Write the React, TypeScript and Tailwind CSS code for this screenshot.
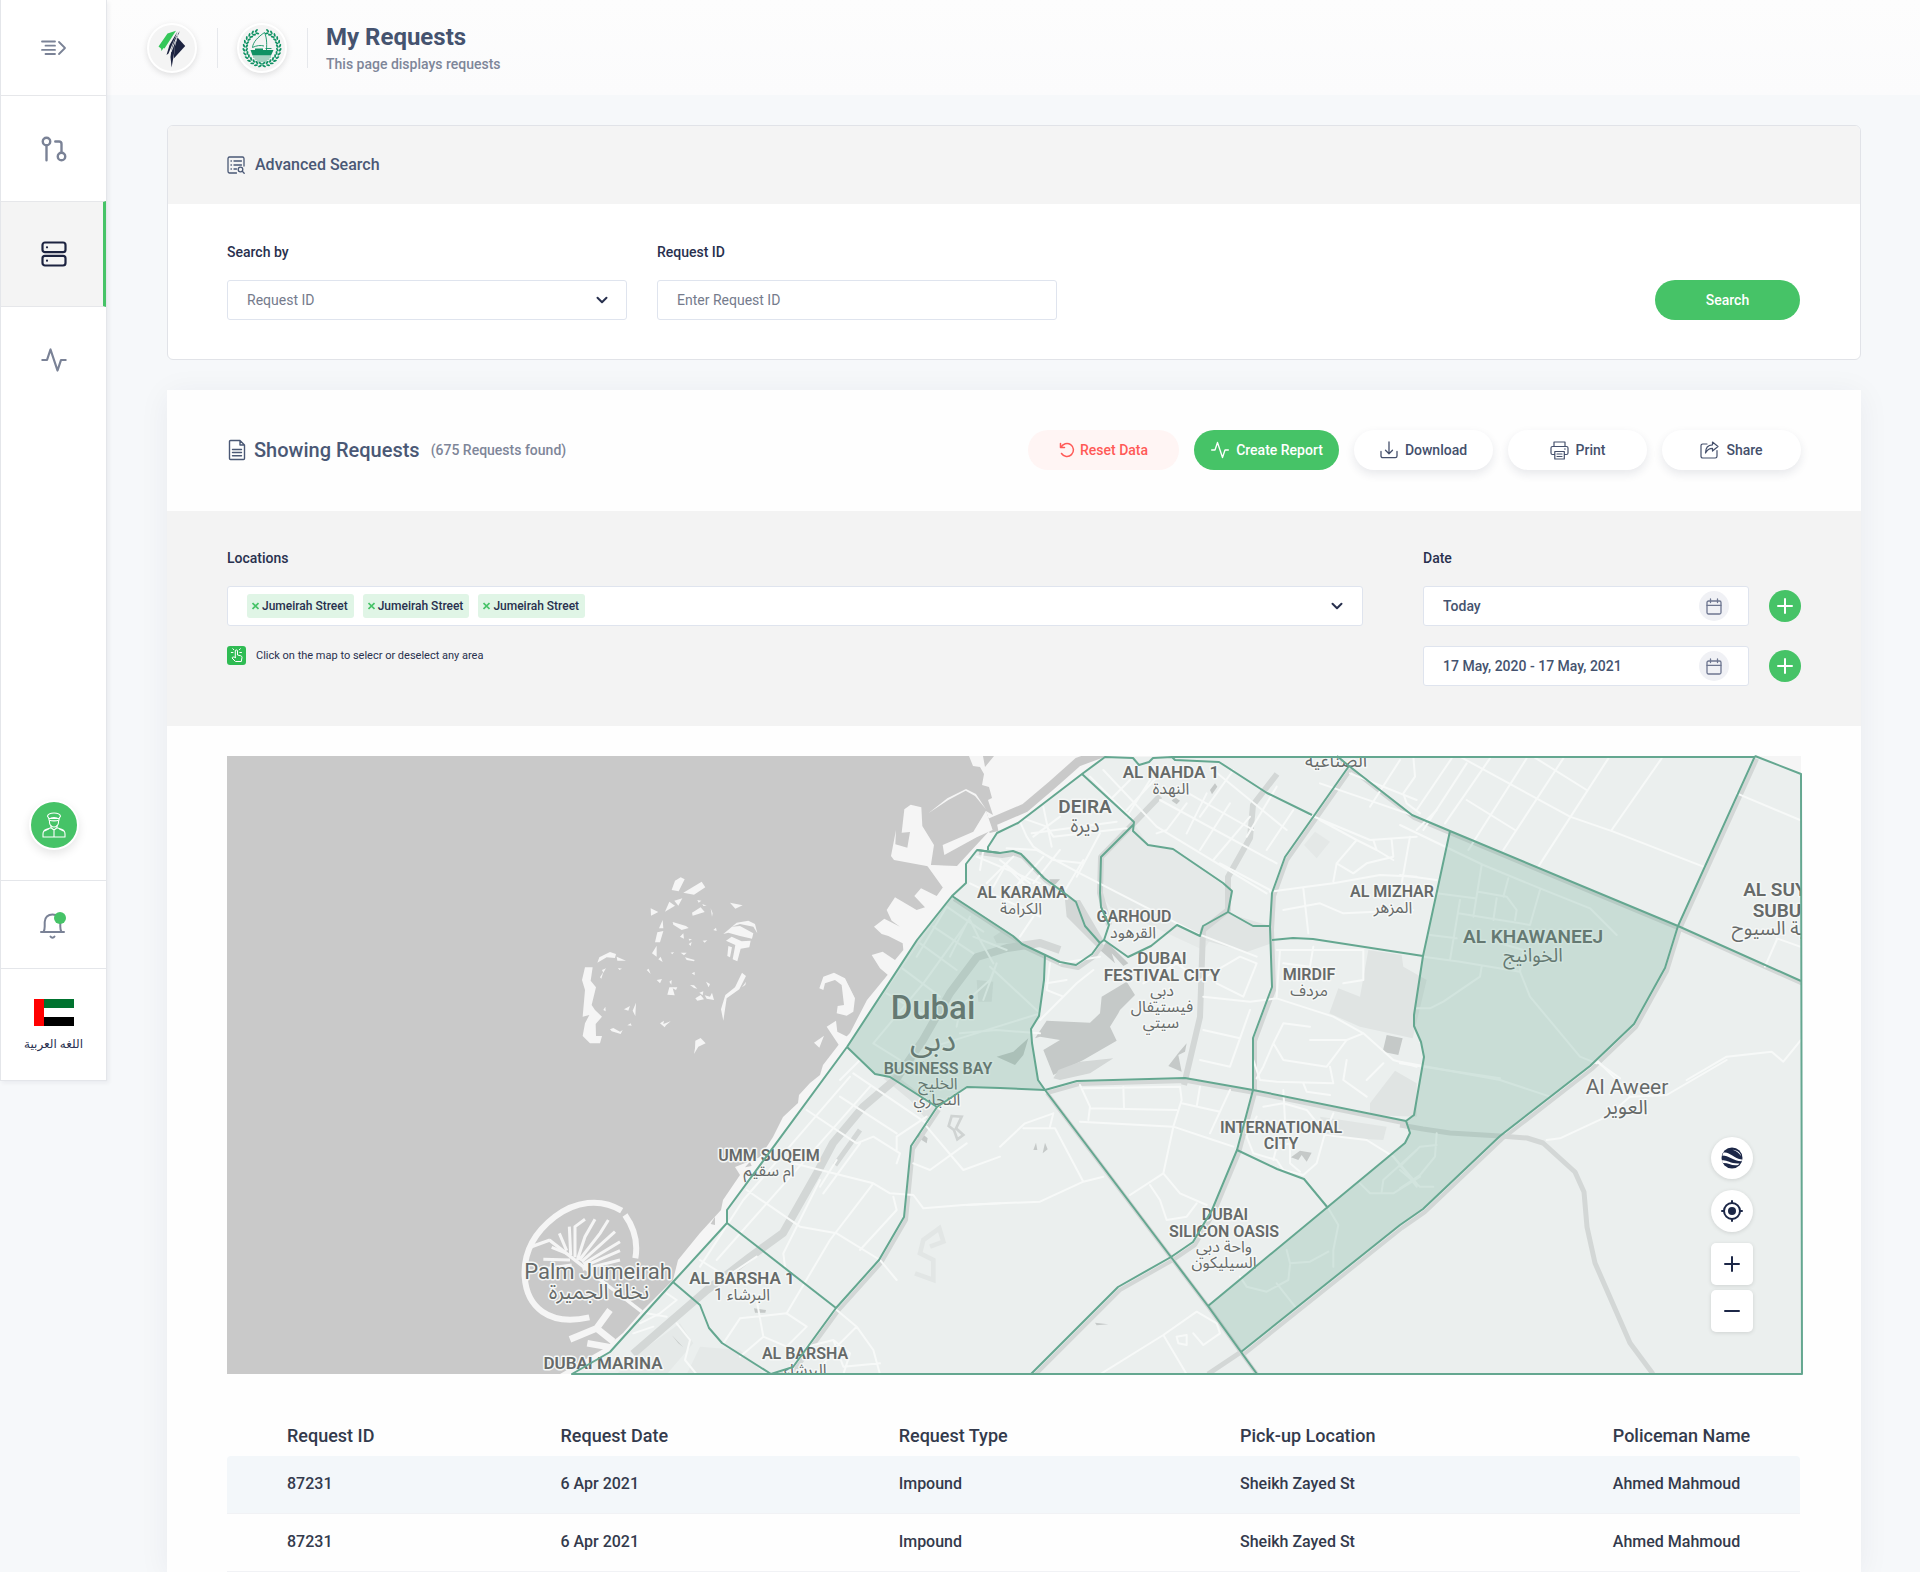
import type { ReactNode } from "react";

const SANS = "font-['Roboto','DejaVu_Sans',sans-serif]";

/* ---------- Icons ---------- */

function PulseIcon({ size, stroke }: { size: number; stroke: number }) {
  return (
    <svg width={size} height={size} viewBox="0 0 24 24" fill="none" stroke="currentColor" strokeWidth={stroke} strokeLinecap="round" strokeLinejoin="round" aria-hidden="true">
      <polyline points="22 12 18 12 15 21 9 3 6 12 2 12" />
    </svg>
  );
}

function ChevronIcon() {
  return (
    <svg width="14" height="14" viewBox="0 0 14 14" fill="none" stroke="#28304e" strokeWidth="2" strokeLinecap="round" strokeLinejoin="round" aria-hidden="true">
      <path d="M2.500 4.700 7 9.200 11.500 4.700" />
    </svg>
  );
}

function MenuIcon() {
  return (
    <svg width="26" height="16" viewBox="0 0 26 16" fill="none" stroke="#7a8296" strokeWidth="1.800" strokeLinecap="round" strokeLinejoin="round" aria-hidden="true">
      <path d="M1 1.500h13M4.500 5.700h9.500M1 9.900h13M4.500 14h9.500M18 2l6 6-6 6" />
    </svg>
  );
}

function BranchIcon() {
  return (
    <svg width="30" height="30" viewBox="0 0 24 24" fill="none" stroke="#7a8296" strokeWidth="1.900" strokeLinecap="round" strokeLinejoin="round" aria-hidden="true">
      <circle cx="18" cy="18" r="3" />
      <circle cx="6" cy="6" r="3" />
      <path d="M13 6h3a2 2 0 0 1 2 2v7M6 9v12" />
    </svg>
  );
}

function ServerIcon() {
  return (
    <svg width="26" height="26" viewBox="0 0 26 26" fill="none" stroke="#1c2340" strokeWidth="2.200" strokeLinecap="round" aria-hidden="true">
      <rect x="1.500" y="1.500" width="23" height="9.700" rx="2.500" />
      <rect x="1.500" y="14.800" width="23" height="9.700" rx="2.500" />
      <path d="M6 6.300h.01M6 19.700h.01" />
    </svg>
  );
}

function OfficerIcon() {
  return (
    <svg width="24" height="26" viewBox="0 0 24 26" fill="none" stroke="#fff" strokeWidth="1.100" strokeLinejoin="round" strokeLinecap="round" aria-hidden="true">
      <path d="M5.500 4.200C6 2 8.500 1 12 1s6 1 6.500 3.200L17 6.500H7z" />
      <path d="M7 6.500v1.700c3 .8 7 .8 10 0V6.500M7.500 8.300v2.200c0 2.300 2 4.500 4.500 4.500s4.500-2.200 4.500-4.500V8.300M9 6c2-.6 4-.6 6 0" />
      <path d="M9 13.800v2L4.500 17.300C2 18.200 1 19.500 1 22v3h22v-3c0-2.500-1-3.800-3.500-4.700L15 15.800v-2M9 15.800l3 2.200 3-2.200M12 18v7M2.500 19l4-2M21.500 19l-4-2" />
    </svg>
  );
}

function BellIcon() {
  return (
    <svg width="28" height="30" viewBox="0 0 28 30" fill="none" stroke="#7a8296" strokeWidth="2" strokeLinecap="round" strokeLinejoin="round" aria-hidden="true">
      <path d="M1 22h23M3.500 22c1-1.500 1.200-3 1.200-5.500v-4.500C4.700 7.500 8 4.500 12.500 4.500s7.800 3 7.800 7.500v4.500c0 2.500.2 4 1.200 5.500M10.500 26.500c1 1.500 3 1.500 4 0" />
      <circle cx="20" cy="8" r="6" fill="#46c367" stroke="none" />
    </svg>
  );
}

function FlagIcon() {
  return (
    <svg width="40" height="27" viewBox="0 0 40 27" aria-hidden="true">
      <path fill="#00732f" d="M0 0h40v9H0z" />
      <path fill="#fff" d="M0 9h40v9H0z" />
      <path fill="#000" d="M0 18h40v9H0z" />
      <path fill="#f00" d="M0 0h10v27H0z" />
    </svg>
  );
}

function RoadLogo() {
  return (
    <svg width="40" height="40" viewBox="0 0 40 40" aria-hidden="true">
      <path fill="#35c75a" d="M6.500 18.500 15.500 5.500 24 2.700 12.500 20.500 11.500 20 9.500 23 9 20.500z" />
      <path fill="#1c2340" d="M25.500 3.500 17.500 17 14.500 27 16.500 25.500 22 12z" />
      <path fill="#1c2340" d="M27.800 3 23.500 13.500 21.800 27 19.600 39.500 18.500 29 19.700 20 22.500 11z" />
      <path fill="#1c2340" d="M25.500 9.500 33.200 18 21.800 30.500 22.500 20z" />
      <path stroke="#f4f4f4" strokeWidth=".9" d="M26 6 19 24" fill="none" />
    </svg>
  );
}

const leaves = Array.from({ length: 26 }, (_, i) => 18 + (i * 324) / 25);

function PoliceLogo() {
  return (
    <svg width="40" height="40" viewBox="0 0 40 40" aria-hidden="true">
      <g fill="#0f9163">
        {leaves.map((angle) => (
          <g key={angle} transform={`rotate(${angle} 20 20)`}>
            <ellipse cx="20" cy="1.800" rx=".95" ry="2" transform={angle < 180 ? "rotate(-60 20 1.800)" : "rotate(60 20 1.800)"} />
            <ellipse cx="20" cy="4.600" rx=".95" ry="2" transform={angle < 180 ? "rotate(60 20 4.600)" : "rotate(-60 20 4.600)"} />
          </g>
        ))}
        <path d="M8.500 22h23l-2.500 5.500H10.500zM13 20.500h8V22h-8z" />
        <path d="M11 28.500h18v1H11zM12.500 30.500h15v1h-15zM15 32.500h10v1H15z" opacity=".7" />
      </g>
      <path d="M22.500 4.500C16 9 11 14 10.500 19.500c4-2 8-2.500 11.500-1.500M22.500 4.500C24.500 9 25 14 24.500 22M23.500 20.500h6" fill="none" stroke="#0f9163" strokeWidth=".9" />
    </svg>
  );
}

function ListSearchIcon() {
  return (
    <svg width="18" height="18" viewBox="0 0 18 18" fill="none" stroke="#4a5875" strokeWidth="1.300" strokeLinecap="round" strokeLinejoin="round" aria-hidden="true">
      <path d="M9.500 17H2.500A1.700 1.700 0 0 1 1 15.300V2.500A1.700 1.700 0 0 1 2.500 1h13A1.700 1.700 0 0 1 17 2.500V10M7 5h7.500M7 9h7.500M7 13h2.500M4 5h.4M4 9h.4M4 13h.4" />
      <circle cx="13.500" cy="13.500" r="2.300" />
      <path d="m15.300 15.300 1.900 1.900" />
    </svg>
  );
}

function DocumentIcon() {
  return (
    <svg width="18" height="22" viewBox="0 0 18 22" fill="none" stroke="#4a5875" strokeWidth="1.400" strokeLinecap="round" strokeLinejoin="round" aria-hidden="true">
      <path d="M12 1.500H2.500a1 1 0 0 0-1 1v17a1 1 0 0 0 1 1h13a1 1 0 0 0 1-1V6zM12 1.500V6h4.500M4.500 10.500h9M4.500 13.500h9M4.500 16.800h9" />
    </svg>
  );
}

function ResetIcon() {
  return (
    <svg width="16" height="16" viewBox="0 0 16 16" fill="none" stroke="currentColor" strokeWidth="1.500" strokeLinecap="round" strokeLinejoin="round" aria-hidden="true">
      <path d="M1.500 1.500v4h4M2 5.300A6.500 6.500 0 1 1 2.500 11.500" />
    </svg>
  );
}

function DownloadIcon() {
  return (
    <svg width="18" height="18" viewBox="0 0 18 18" fill="none" stroke="currentColor" strokeWidth="1.300" strokeLinecap="round" strokeLinejoin="round" aria-hidden="true">
      <path d="M1 10.500V15a1.700 1.700 0 0 0 1.700 1.700h12.600A1.700 1.700 0 0 0 17 15v-4.500M9 1v11.500M5.500 9.300 9 12.700l3.500-3.400" />
    </svg>
  );
}

function PrintIcon() {
  return (
    <svg width="19" height="19" viewBox="0 0 19 19" fill="none" stroke="currentColor" strokeWidth="1.200" strokeLinecap="round" strokeLinejoin="round" aria-hidden="true">
      <path d="M4 5.500V1h11v4.500M4 13.500H2.500A1.500 1.500 0 0 1 1 12V7a1.500 1.500 0 0 1 1.500-1.500h14A1.500 1.500 0 0 1 18 7v5a1.500 1.500 0 0 1-1.500 1.500H15M4.800 10.500h9.500V18H4.800zM7 13h5M7 15.500h5M14.500 8h.8" />
    </svg>
  );
}

function ShareIcon() {
  return (
    <svg width="19" height="18" viewBox="0 0 19 18" fill="none" stroke="currentColor" strokeWidth="1.200" strokeLinecap="round" strokeLinejoin="round" aria-hidden="true">
      <path d="M7 3H2.700A1.700 1.700 0 0 0 1 4.700v10.600A1.700 1.700 0 0 0 2.700 17h12.600a1.700 1.700 0 0 0 1.700-1.700V9.500" />
      <path d="M12.500 1 18 5.500 12.500 10V7.300C9 7.300 7 9 5.500 12c0-5 2.500-8 7-8.200z" />
    </svg>
  );
}

function TapIcon() {
  return (
    <svg width="19" height="19" viewBox="0 0 19 19" className="shrink-0" aria-hidden="true">
      <rect width="19" height="19" rx="3" fill="#2fbb53" />
      <path d="M8.300 11.500V5a1.100 1.100 0 0 1 2.200 0v4l3.300.8c.8.200 1.200.8 1.200 1.500l-.7 4.200H8.500L5 12c.3-1.200 1.500-1.300 3.300-.5zM6 6.500H4.300M12.800 6.500h1.700M6.800 3.800 5.800 2.700M12.300 3.800l1-1.100" fill="none" stroke="#fff" strokeWidth="1" strokeLinecap="round" strokeLinejoin="round" />
    </svg>
  );
}

function CalendarIcon() {
  return (
    <svg width="16" height="17" viewBox="0 0 16 17" fill="none" stroke="#6d7690" strokeWidth="1.300" strokeLinecap="round" strokeLinejoin="round" aria-hidden="true">
      <rect x="1" y="3" width="14" height="13" rx="1.500" />
      <path d="M1 7.300h14M4.500 1v3.500M11.500 1v3.500" />
    </svg>
  );
}

function PlusIcon() {
  return (
    <svg width="16" height="16" viewBox="0 0 16 16" fill="none" stroke="currentColor" strokeWidth="2" strokeLinecap="round" aria-hidden="true">
      <path d="M8 1v14M1 8h14" />
    </svg>
  );
}

function MinusIcon() {
  return (
    <svg width="16" height="16" viewBox="0 0 16 16" fill="none" stroke="currentColor" strokeWidth="2" strokeLinecap="round" aria-hidden="true">
      <path d="M1 8h14" />
    </svg>
  );
}

function GlobeIcon() {
  return (
    <svg width="22" height="22" viewBox="0 0 22 22" aria-hidden="true">
      <circle cx="11" cy="11" r="10.500" fill="#1c2747" />
      <path d="M2.500 5.500C9 4.500 12 11 21 12.500l-.3 1.700C12 14 8 8.500 1.200 8.500zM.8 13.500c5-1 8 3.500 17.700 3l-1.300 1.500C10 19 7 15.500 1.700 16zM11.500 2.800c4 1 6.500 3.500 8.500 6.200-.3-2.500-3-5.800-8.500-6.200z" fill="#fff" />
    </svg>
  );
}

function TargetIcon() {
  return (
    <svg width="22" height="22" viewBox="0 0 22 22" fill="none" stroke="#1c2747" strokeWidth="2" strokeLinecap="round" aria-hidden="true">
      <circle cx="11" cy="11" r="8" />
      <circle cx="11" cy="11" r="4" fill="#1c2747" stroke="none" />
      <path d="M11 1v2M11 19v2M1 11h2M19 11h2" />
    </svg>
  );
}

/* ---------- Map ---------- */

// District outlines, in the map's own coordinate space.
const outlines = [
  "M988 850V847L997 833 1018 823 1082 774 1105 757 1133 758 1139 765 1149 762 1153 758 1172 757 1175 760 1219 762 1267 793 1312 815",
  "M1172 757H1755",
  "M1000 853 977 850 966 864V883L952 896 917 940 847 1047 727 1210V1223L673 1282 610 1352 572 1374H1802L1801 774 1755 756",
  "M1082 774 1134 822 1133 831 1148 845 1173 849 1223 883 1232 891 1228 912 1203 926 1200 936 1177 925 1151 946 1128 957 1104 940 1109 925 1101 907 1100 893 1101 857 1134 824",
  "M1100 943 1104 940M1228 912 1253 926H1271",
  "M1272 940 1293 938 1313 939 1423 956",
  "M1045 955 1044 980 1039 1016 1031 1029 1032 1043 1038 1080 1045 1090",
  "M847 1047 875 1074 890 1077 937 1107 967 1087 1000 1088 1045 1090",
  "M1450 831 1423 956 1414 1015V1026L1421 1042 1424 1057 1420 1080 1414 1115 1406 1121 1410 1133 1405 1143 1208 1306",
  "M1237 1150 1277 1169 1304 1179 1328 1208",
  "M727 1223 836 1308",
  "M673 1282 700 1305 709 1328 722 1343 771 1374",
];

// Outlines that run along a motorway.
const motorwayOutlines = [
  "M977 850 1000 853 1013 851 1021 854 1044 878 1067 895 1076 902 1085 926 1100 943 1092 954 1076 965 1060 962 1022 944 1013 936 952 896",
  "M1349 766 1285 857 1272 893 1270 927 1272 987 1253 1038V1090L1237 1150 1212 1210 1193 1242 1171 1257 1118 1287 1031 1374",
  "M1337 756 1349 766 1412 815 1450 831 1678 926 1801 981",
  "M1755 756 1678 926 1665 968 1634 1024 1590 1066 1500 1136 1423 1209 1400 1225 1241 1352",
  "M1045 1090 1077 1081 1185 1078 1253 1090 1406 1121",
  "M1045 1090 1171 1257 1208 1306 1241 1352 1257 1374",
  "M937 1107 911 1146 904 1217 879 1260 836 1308 793 1367 771 1374",
];

const selectedAreas = [
  "M952 896 1013 936 1022 944 1045 955 1044 980 1039 1016 1031 1029 1032 1043 1038 1080 1045 1090 1000 1088 967 1087 937 1107 890 1077 875 1074 847 1047 917 940Z",
  "M1450 831 1678 926 1665 968 1634 1024 1590 1066 1500 1136 1423 1209 1400 1225 1241 1352 1208 1306 1405 1143 1410 1133 1406 1121 1414 1115 1420 1080 1424 1057 1421 1042 1414 1026V1015L1423 956Z",
];

type Place = { x: number; y: number; size: number; weight: number; text: string };

const places: Place[] = [
  { x: 1171, y: 778, size: 17, weight: 600, text: "AL NAHDA 1" },
  { x: 1171, y: 794, size: 16, weight: 400, text: "النهدة" },
  { x: 1085, y: 813, size: 19, weight: 600, text: "DEIRA" },
  { x: 1085, y: 832, size: 19, weight: 400, text: "ديرة" },
  { x: 1336, y: 767, size: 18, weight: 400, text: "الصناعية" },
  { x: 1022, y: 898, size: 16, weight: 600, text: "AL KARAMA" },
  { x: 1021, y: 914, size: 16, weight: 400, text: "الكرامة" },
  { x: 1134, y: 922, size: 16, weight: 600, text: "GARHOUD" },
  { x: 1133, y: 938, size: 16, weight: 400, text: "القرهود" },
  { x: 1162, y: 964, size: 17, weight: 600, text: "DUBAI" },
  { x: 1162, y: 981, size: 17, weight: 600, text: "FESTIVAL CITY" },
  { x: 1162, y: 996, size: 16, weight: 400, text: "دبي" },
  { x: 1162, y: 1012, size: 16, weight: 400, text: "فيستيفال" },
  { x: 1161, y: 1028, size: 16, weight: 400, text: "سيتي" },
  { x: 1309, y: 980, size: 16, weight: 600, text: "MIRDIF" },
  { x: 1309, y: 996, size: 16, weight: 400, text: "مردف" },
  { x: 1392, y: 897, size: 16, weight: 600, text: "AL MIZHAR" },
  { x: 1393, y: 913, size: 16, weight: 400, text: "المزهر" },
  { x: 1533, y: 943, size: 19, weight: 600, text: "AL KHAWANEEJ" },
  { x: 1533, y: 962, size: 19, weight: 400, text: "الخوانيج" },
  { x: 933, y: 1019, size: 33, weight: 500, text: "Dubai" },
  { x: 933, y: 1051, size: 31, weight: 400, text: "دبي" },
  { x: 938, y: 1074, size: 16, weight: 600, text: "BUSINESS BAY" },
  { x: 938, y: 1089, size: 16, weight: 400, text: "الخليج" },
  { x: 937, y: 1105, size: 16, weight: 400, text: "التجاري" },
  { x: 1627, y: 1094, size: 21, weight: 400, text: "Al Aweer" },
  { x: 1626, y: 1114, size: 20, weight: 400, text: "العوير" },
  { x: 1281, y: 1133, size: 16, weight: 600, text: "INTERNATIONAL" },
  { x: 1281, y: 1149, size: 16, weight: 600, text: "CITY" },
  { x: 1225, y: 1220, size: 16, weight: 600, text: "DUBAI" },
  { x: 1224, y: 1237, size: 16, weight: 600, text: "SILICON OASIS" },
  { x: 1224, y: 1252, size: 16, weight: 400, text: "واحة دبي" },
  { x: 1224, y: 1268, size: 16, weight: 400, text: "السيليكون" },
  { x: 769, y: 1161, size: 16, weight: 600, text: "UMM SUQEIM" },
  { x: 769, y: 1176, size: 16, weight: 400, text: "ام سقيم" },
  { x: 598, y: 1279, size: 22, weight: 400, text: "Palm Jumeirah" },
  { x: 599, y: 1299, size: 21, weight: 400, text: "نخلة الجميرة" },
  { x: 742, y: 1284, size: 17, weight: 600, text: "AL BARSHA 1" },
  { x: 742, y: 1300, size: 16, weight: 400, text: "البرشاء 1" },
  { x: 805, y: 1359, size: 16, weight: 600, text: "AL BARSHA" },
  { x: 805, y: 1375, size: 16, weight: 400, text: "البرشاء" },
  { x: 603, y: 1369, size: 17, weight: 600, text: "DUBAI MARINA" },
  { x: 1788, y: 896, size: 19, weight: 600, text: "AL SUYOH" },
  { x: 1789, y: 917, size: 19, weight: 600, text: "SUBURB" },
  { x: 1786, y: 935, size: 19, weight: 400, text: "ضاحية السيوح" },
];

function DistrictMap() {
  return (
    <svg viewBox="227 756 1574 618" className="block h-auto w-full overflow-visible" role="img" aria-label="Map of Dubai districts">
      <defs>
        <clipPath id="map-frame">
          <rect x="227" y="756" width="1574" height="618" />
        </clipPath>
        <clipPath id="map-districts">
          <path d="M988 850 997 833 1018 823 1082 774 1105 757H1755L1801 774V1374H572L610 1352 673 1282 727 1223V1210L847 1047 952 896 966 883V864L977 850Z" />
        </clipPath>
      </defs>
      <g clipPath="url(#map-frame)">
        <rect x="227" y="756" width="1574" height="618" fill="#c9c9c9" />

        {/* Mainland */}
        <path
          fill="#f5f5f5"
          d="M969 756 973 766 980 767 984 774 982 785 989 787 992 798 988 800 993 815 986 811 992 828 957 866 929 865 945 885 941 895 922 930 890 972 867 1000 850 1033 840 1043 823 1065 820 1075 810 1083 799 1095 798 1103 783 1117 773 1137 760 1157 735 1167 740 1175 723 1200 721 1210 700 1233 678 1260 673 1280 643 1310 623 1333 605 1348 560 1374H1801V756Z"
        />
        <path fill="#c9c9c9" d="M983 756H994L985 767ZM961 846 974 832 977 837 945 855 943 844Z" />
        <path fill="none" stroke="#c9c9c9" strokeWidth="9" d="M1105 752 1078 762 1052 785 1025 808 992 822 994 832" />

        {/* Harbour islands */}
        <g transform="translate(540 750) scale(.33333)" fill="#f5f5f5">
          <path d="M1093 178 1112 164 1144 172 1147 228 1182 285 1172 350 1062 330 1053 318 1068 240 1066 283 1102 293 1110 246 1085 248Z" />
          <path d="M1165 190 1222 145 1278 117 1308 132 1338 178 1305 138 1277 122 1225 150Z" />
          <path d="M1208 285 1300 245 1338 182 1358 240 1310 262 1213 315Z" />
          <path d="M1160 345 1250 350 1280 342 1240 440 1210 415Z" />
          <path d="M1143 415 1190 438 1210 410 1240 440 1050 680 1020 655 995 615 1028 605 1065 630 1090 600 1088 580 1045 558 1025 552 1002 530 1033 506 1080 530 1055 512 1040 480 1065 442 1130 480 1155 472 1123 438Z" />
          <path d="M838 715 850 680 882 668 915 685 945 745 940 785 920 797 890 790 893 768 912 765 905 705 885 690 855 700 850 720Z" />
          <path d="M822 878 852 857 838 893ZM860 830 888 812 892 845 925 862 900 890Z" />
          {/* The World */}
          <path d="M395 420 405 392 422 382 434 388 416 424ZM430 428 485 395 496 412 462 434ZM375 485 388 455 405 467ZM403 452 427 445 415 467ZM332 475 355 486 333 497ZM456 488 482 472 494 486 458 497ZM570 458 608 466 586 476ZM398 516 438 528 446 534 425 540 400 524ZM357 535 368 510 370 535ZM345 577 352 547 370 543 360 577ZM336 610 350 587 350 620ZM472 450 484 452 476 458ZM487 462 500 467 490 468ZM512 475 518 490 516 500ZM420 560 430 550 432 566ZM446 566 456 568 448 572ZM446 582 455 576 452 588ZM488 572 502 571 494 578ZM520 540 528 533 530 543ZM392 608 402 606 397 613ZM422 608 440 608 432 616ZM435 622 464 630 462 634 440 630ZM355 628 362 620 368 636ZM320 660 326 656 332 672ZM350 690 366 687 360 700ZM388 695 395 690 394 704ZM388 712 412 712 408 720 398 715 404 736 382 734ZM455 670 464 666 464 676ZM450 705 462 706 472 716 462 714ZM478 728 490 724 488 736ZM498 695 510 702 506 712ZM466 745 482 735 492 748 472 752ZM494 736 510 740 516 728 522 750 500 746Z" />
          <path d="M550 552 590 518 625 512 645 522 652 550 640 530 600 522 575 530 600 528 640 550 636 566 600 558 565 548ZM558 572 575 560 605 574 632 572 628 592 602 596 592 634 578 628 586 585ZM565 588 576 592 570 622 562 618ZM543 778 556 735 585 712 606 668 618 678 598 718 560 745 550 812ZM606 712 618 695 616 705Z" />
          <path d="M135 652 158 652 152 692 168 712 155 765 165 780 186 800 167 822 168 858 186 858 180 880 150 880 128 858 135 820 148 795 128 800 135 720 126 690ZM172 638 178 622 210 606 228 612 225 624 200 622ZM230 620 258 632 232 632ZM180 682 190 666 184 686ZM186 660 198 655 190 668ZM234 654 246 656 238 660ZM190 780 196 770 197 784ZM252 778 270 768 265 782ZM278 782 288 758 286 798ZM262 826 272 820 275 827ZM210 838 220 834 240 845 248 840 242 852 215 844ZM360 820 372 812 370 822 392 814 378 826 374 832ZM465 895 466 872 482 864 497 880 475 890 462 912Z" />
        </g>

        {/* Palm Jumeirah */}
        <g transform="translate(500 1060) scale(.33333)" fill="none" stroke="#f5f5f5" strokeLinecap="butt">
          <path strokeWidth="18" d="M365 452C300 412 225 425 165 470 100 520 70 580 74 650 80 740 145 800 268 772M375 465C400 500 415 545 406 595" />
          <path strokeWidth="10" d="M148 540 250 620 425 755M95 560 150 540" />
          <path strokeWidth="9" d="M200 572 178 520M212 585 208 500M225 592 225 500 255 478M232 600 255 530 285 478M238 600 300 520 325 480M245 605 345 515M250 612 360 545M250 620 360 572M248 628 360 600M200 580 155 562M210 600 130 598M215 615 145 625" />
          <path strokeWidth="20" d="M330 750 290 805 210 838M290 805 340 845M262 850 330 862 300 900" />
          <path fill="#c9c9c9" stroke="none" d="M632 492 645 470 645 495ZM735 322 750 305 755 318Z" />
        </g>

        {/* Districts: base, land use and roads */}
        <g clipPath="url(#map-districts)">
          <rect x="560" y="756" width="1242" height="620" fill="#ebefee" />
          <g transform="translate(1000 750) scale(.33333)">
            <path fill="#e5e9e8" d="M402 220 303 322 300 430 330 470 610 600 690 485 695 423 518 297 445 285Z" />
            <path fill="#e0e4e3" d="M610 540 683 490 808 527 815 580 740 606 610 570ZM1105 600 1205 615 1210 650 1280 690 1238 865 1080 830 988 790 1015 715 1080 740ZM1110 1060 1185 962 1250 1000 1250 1100 1110 1095Z" />
            <path fill="#e4e8e7" d="M912 285 945 245 990 275 950 325Z" />
            <path fill="#c5c9c8" d="M1160 855 1208 865 1195 915 1148 905ZM630 120 645 100 652 110 636 133ZM515 152 525 142 540 152 530 163ZM505 948 538 905 560 880 555 905 535 915 545 965ZM320 575 385 640 370 648 335 610 345 640 300 600ZM148 388 180 388 160 410Z" />
            <path fill="#c5c9c8" d="M105 865 140 812 270 818 300 790 305 740 380 695 405 735 360 780 355 790 330 830 350 872 250 930 160 975 130 900 180 870 120 860Z" />
            <path fill="#d3d7d6" d="M160 985 175 960 240 935 340 925 270 970 180 990ZM195 450 240 450 310 570 290 590 200 500Z" />
          </g>
          <g transform="translate(540 750) scale(.33333)">
            <path fill="#dfe3e2" d="M1360 560 1390 540 1430 580 1370 580ZM1310 690 1360 695 1355 755 1315 755Z" />
            <path fill="#c3c8c6" d="M1370 920 1420 905 1465 865 1450 915 1425 945Z" />
          </g>
          <g transform="translate(500 1060) scale(.33333)">
            <path fill="#dfe3e2" d="M1150 55 1180 40 1310 140 1280 180 1230 120Z" />
            <path fill="#e5e9e8" d="M560 943 600 860 720 870 790 940ZM400 890 540 790 580 850 500 943H350Z" />
            <path fill="none" stroke="#e2e6e5" strokeWidth="14" d="M1245 640 1300 660 1300 600 1260 580 1270 540 1318 505 1330 545 1290 560" />
            <path fill="#c5c9c8" d="M515 825 550 862 535 850ZM1250 230 1265 220 1283 235 1280 250ZM762 745 798 750 796 758 765 758Z" />
            <path fill="none" stroke="#cfd3d2" strokeWidth="8" d="M1355 168 1385 170 1368 205 1390 225 1372 238 1362 210 1346 198Z" />
          </g>
          <g transform="translate(1000 1060) scale(.33333)">
            <path fill="#e1e5e4" d="M960 170 1160 200 1150 240 980 230Z" />
            <path fill="#c5c9c8" d="M873 292 900 272 935 278 920 305 905 285 895 300ZM100 270 108 248 112 270ZM128 280 135 248 143 268ZM285 788 325 793 290 796Z" />
          </g>

          {/* Motorways */}
          <g fill="none" stroke="#d3d7d6" strokeLinejoin="round">
            <path strokeWidth="8" d="M633 1354 707 1290 750 1257 783 1233 817 1173 833 1143 863 1107 897 1078 923 1040 950 993 977 957 1007 948 1040 943 1060 950" />
            <path strokeWidth="6" d="M1160 796 1134 823 1101 857 1100 893 1109 925M1277 774 1253 805 1250 838 1228 877 1228 910 1203 930 1200 1017 1184 1085" />
            <path strokeWidth="5" d="M1400 1125 1423 1129 1450 1133 1500 1136 1527 1138 1543 1143 1575 1172 1584 1192 1587 1227 1595 1263 1630 1343 1653 1374M1241 1352 1208 1374M835 1165 860 1130" />
            <g strokeWidth="4" transform="translate(2 3)">
              {motorwayOutlines.map((d) => (
                <path key={d} d={d} />
              ))}
            </g>
          </g>

          {/* Streets */}
          <g fill="none" stroke="#f7f9f8" strokeWidth="6" strokeLinejoin="round" strokeLinecap="round">
            <g transform="translate(1000 750) scale(.33333)">
              <path d="M60 215 80 260 100 290 160 330 250 340M70 205 140 230 160 260 380 235M130 170 155 290M20 295 110 300 240 370M95 250 350 215M130 320 60 400M180 300 100 400M250 330 190 430M300 250 230 380M240 370 590 550 770 620M0 330 90 400M40 320-40 400M20 350 110 440M180 200 100 260" />
              <path d="M270 80 390 200M310 60 470 230M390 90 330 150M450 90 380 200M500 50 380 180M480 150 830 340M560 160 500 240 470 250M620 130 560 250M690 160 600 300M750 200 640 330M470 230 800 430M640 60 860 240M830 110 740 260M880 180 800 300M530 110 760 240M660 340 810 420M700 60 600 200" />
              <path d="M810 425 920 410 1000 400 1140 375 1250 380M910 415 925 550M1000 395 1010 340 1070 270 960 210M930 195 1110 270 1250 260M1070 270 1130 300 1180 330M1130 300 1120 270M1010 340 1060 370 1100 340 1180 320 1175 270M960 100 1250 200M1050 70 1250 150M1110 170 1200 30M1250 240 1310 180M850 480 960 460 1030 490 1240 480" />
              <path d="M610 740 750 755 830 745 1000 800 1090 850 1180 930 1250 950M840 600 830 740M830 600H1090V690L1030 700M850 640 930 650 940 590M610 840 720 865 750 780M720 865 690 950 600 930M930 870 1040 870 1090 850M1040 870 980 950 850 930 820 880 790 950 770 985M820 880 850 820 930 830M430 700 530 640 600 690 720 620 770 640 730 740 650 700M1150 940 1100 990" />
              <path d="M120 810 230 700 280 660M150 640 140 720 190 740M180 640 300 620M140 700 200 690" />
            </g>
            <g transform="translate(1400 750) scale(.33333)">
              <path d="M180 20 510 200 640 245 910 350M155 25 50 180M200 40 70 240M270 25 135 220M380 25 205 300M490 25 310 300M625 25 415 350M785 25 635 240M400 20 560 120M200 150 345 240M40 20 45 80 10 130 20 160 60 190M1010 130 1200 210M1130 570 1095 650M1130 565 1200 590M860 990 980 920 1115 905 1150 935 1203 870M590 935 660 985" />
              <path d="M0 225 250 345 420 415 570 475 650 555M30 260 5 400M0 375 110 390M245 345 220 500M325 385 310 440M235 425 320 440 350 480 345 510M110 430 225 445M175 490 390 525 420 420M290 445 280 510M180 450 150 630M90 555 170 565M70 620 180 635 360 665 390 740 540 920 590 940M245 650 240 680 130 755 90 775 50 775M300 580 370 600 360 665M0 940 300 985" />
            </g>
            <g transform="translate(540 750) scale(.33333)">
              <path d="M1220 470 1330 545M1180 530 1300 610M1140 580 1250 660M1080 650 1200 740M1040 730 1160 800M1220 470 1130 620M1290 500 1230 620M1280 520 1150 700 1000 880M1350 650 1500 790M1290 510 1320 570 1360 640M1250 780 1350 690 1370 640 1330 750M1180 890 1500 790M1260 850 1370 840 1500 850M1000 880 1080 930M960 930 900 990M1260 780 1250 830M1310 320 1500 400M1400 340 1360 410M1450 380 1400 450M1330 300 1320 360M1290 400 1500 500M1440 560 1480 500M1400 600 1300 560" />
            </g>
            <g transform="translate(500 1060) scale(.33333)">
              <path d="M1060 40 1280 190M1020 110 1190 220M920 150 1070 250 1120 230 1200 280 1190 310M880 310 1120 370 1170 400 1240 405 1270 445 1390 435 1500 430M740 390 900 500 1010 520 1140 600 1190 660M1050 50 730 420 600 620M1110 80 880 340 650 600M1120 370 990 540 860 760M1010 300 960 380M1180 410 1190 450 1080 570M960 360 850 580 855 620M1080 250 970 400M1280 170 1190 230 1190 270M1280 200 1390 330 1500 290M1240 310 1290 330 1400 250" />
              <path d="M530 790 570 840 555 900 590 943M720 775 860 760 920 800 860 860 790 830 720 890M720 775 670 850M790 830 770 720M420 790 480 760 530 720 500 700M440 760 500 770M400 820 460 800M600 600 680 650 770 590M1010 750 1070 800 1120 870 1140 943M920 860 1000 840 1050 880 1030 943M1070 800 1000 870 950 943M1000 840 1030 920 1140 910" />
            </g>
            <g transform="translate(1000 1060) scale(.33333)">
              <path d="M240 75 270 140 265 180M240 185 520 200 640 240 700 260M270 145 530 150M370 80 372 145M250 85 540 80 545 120 520 200 490 340 390 405M545 130 660 155 690 90M600 80 590 140M660 155 630 220M490 340 540 400 620 435M450 375 480 420 500 480 560 470 590 430M0 260 75 190 160 160M70 205 165 205 250 365 120 425 0 430M310 350 250 365M0 430-100 435M160 160 150 200" />
              <path d="M300 943 490 825 590 755 650 790 660 820 610 855 580 820M490 825 560 943M530 830 560 825 560 855 535 850Z" />
              <path d="M770 170 740 230 760 280 830 300 850 330 910 345 950 310 975 220 1000 160M790 140 850 130 920 150 960 200M820 300 830 260 870 250 870 310 900 335M975 225 1100 240 1180 290 1250 370M850 90 855 180M760 0 780 60 830 65 1000 70 990 20M910 70 920 95 990 105M1040 0 1030 60 1100 110" />
              <path d="M1080 370 1110 400 1180 400 1260 350M1180 290 1250 380M1145 395 1150 360 1250 270M985 445 1015 495 1000 570 1000 620M985 575 930 605 870 610 860 570M870 615 865 660 800 695 740 680 720 650M830 670 885 740" />
            </g>
            <g transform="translate(1400 1060) scale(.33333)">
              <path d="M0 5 300 60 450 110M440 240 480 235 620 170 690 110 800 105 980 0M590 0 670 80 690 110M0 320 60 260 110 255M110 220 105 290 60 345 0 385M0 330 60 380 100 380" />
            </g>
          </g>
        </g>

        {/* Place names */}
        <g textAnchor="middle" fill="#666a69" stroke="#f5f7f6" strokeWidth="3" strokeLinejoin="round" paintOrder="stroke" className="font-['Roboto','Noto_Sans_Arabic','DejaVu_Sans',sans-serif]">
          {places.map((p) => (
            <text key={`${p.text}-${p.x}-${p.y}`} x={p.x} y={p.y} fontSize={p.size} fontWeight={p.weight}>
              {p.text}
            </text>
          ))}
        </g>

        <g fill="#62a78f" fillOpacity=".25">
          {selectedAreas.map((d) => (
            <path key={d} d={d} />
          ))}
        </g>
      </g>

      <g fill="none" stroke="#64a790" strokeWidth="2" strokeLinejoin="round">
        {outlines.concat(motorwayOutlines).map((d) => (
          <path key={d} d={d} />
        ))}
      </g>
    </svg>
  );
}

/* ---------- Page parts ---------- */

function NavItem({ label, active, children }: { label: string; active?: boolean; children: ReactNode }) {
  return (
    <a
      href="#"
      aria-label={label}
      className={
        active
          ? "flex h-[106px] items-center justify-center border-y border-r-[3px] border-y-[#e6e7ea] border-r-[#46c367] bg-[#f4f4f4] pl-[3px]"
          : "flex h-[105px] items-center justify-center text-[#7a8296]"
      }
    >
      {children}
    </a>
  );
}

function Sidebar() {
  return (
    <aside className="z-10 flex w-[107px] shrink-0 flex-col self-start border-x border-b border-[#e4e6ea] bg-white shadow-[2px_2px_4px_rgba(30,40,70,0.06)]">
      <button type="button" aria-label="Expand menu" className="flex h-24 items-center justify-center border-b border-[#e6e7ea]">
        <MenuIcon />
      </button>
      <nav>
        <NavItem label="Routes">
          <BranchIcon />
        </NavItem>
        <NavItem label="Requests" active>
          <ServerIcon />
        </NavItem>
        <NavItem label="Activity">
          <PulseIcon size={28} stroke={1.900} />
        </NavItem>
      </nav>
      <div className="mt-[360px] flex flex-col">
        <div className="flex h-[109px] justify-center border-b border-[#e4e6ea] pt-7">
          <button type="button" aria-label="Profile" className="flex size-[50px] items-center justify-center rounded-full border-2 border-white bg-[#46c367] shadow-[0_4px_10px_rgba(0,0,0,0.10)]">
            <OfficerIcon />
          </button>
        </div>
        <button type="button" aria-label="Notifications" className="flex h-[88px] items-center justify-center border-b border-[#e4e6ea]">
          <BellIcon />
        </button>
        <button type="button" className="flex h-[111px] flex-col items-center gap-2 pt-[30px] text-[#2b3352]">
          <FlagIcon />
          <span lang="ar" className="text-xs leading-5">اللغه العربية</span>
        </button>
      </div>
    </aside>
  );
}

function LogoBadge({ children }: { children: ReactNode }) {
  return (
    <div className="flex size-[50px] items-center justify-center rounded-full border-2 border-white bg-[#f4f4f4] shadow-[0_2px_6px_rgba(0,0,0,0.12)]">
      {children}
    </div>
  );
}

function Header() {
  return (
    <header className="flex h-[95px] items-center bg-linear-to-b from-[#fdfdfd] to-[#fbfbfc] pl-10">
      <LogoBadge>
        <RoadLogo />
      </LogoBadge>
      <div className="ml-5 h-10 w-px bg-[#e6e8ec]" />
      <div className="ml-[19px]">
        <LogoBadge>
          <PoliceLogo />
        </LogoBadge>
      </div>
      <div className="ml-5 h-10 w-px bg-[#e6e8ec]" />
      <div className="ml-[18px] flex flex-col pt-px">
        <h1 className="text-2xl leading-7 font-bold text-[#45536f]">My Requests</h1>
        <p className="mt-[3px] text-sm leading-5 font-medium text-[#7e8699]">This page displays requests</p>
      </div>
    </header>
  );
}

const LABEL = "text-sm leading-5 font-medium text-[#28304e]";
const FIELD = "h-10 w-full rounded-[3px] border border-[#dfe4ee] bg-white pl-[19px] text-sm outline-none";

function SearchCard() {
  return (
    <section className="overflow-hidden rounded-md border border-[#e1e3e8] bg-white">
      <div className="flex h-[78px] items-center gap-[10px] bg-[#f4f4f4] px-[59px]">
        <ListSearchIcon />
        <h2 className="text-base leading-6 font-medium text-[#4a5875]">Advanced Search</h2>
      </div>
      <form className="flex items-end gap-[30px] pt-[38px] pr-[60px] pb-[39px] pl-[59px]">
        <div className="flex w-[400px] flex-col gap-[18px]">
          <label htmlFor="search-by" className={LABEL}>
            Search by
          </label>
          <div className="relative">
            <select id="search-by" className={`${FIELD} appearance-none text-[#757b8c]`}>
              <option>Request ID</option>
            </select>
            <span className="pointer-events-none absolute top-[13px] right-[18px]">
              <ChevronIcon />
            </span>
          </div>
        </div>
        <div className="flex w-[400px] flex-col gap-[18px]">
          <label htmlFor="request-id" className={LABEL}>
            Request ID
          </label>
          <input id="request-id" type="text" placeholder="Enter Request ID" className={`${FIELD} placeholder:text-[#757b8c]`} />
        </div>
        <button type="button" className="ml-auto h-10 w-[145px] rounded-full bg-[#46c367] text-sm font-medium text-white">
          Search
        </button>
      </form>
    </section>
  );
}

const PILL = "flex h-10 items-center justify-center rounded-full text-sm font-medium";
const WHITE_PILL = `${PILL} w-[139px] gap-[7px] bg-white text-[#45506c] shadow-[0_4px_10px_rgba(30,40,70,0.10)]`;

function Toolbar() {
  return (
    <div className="flex items-center justify-between px-[60px] pt-10 pb-[41px]">
      <div className="flex items-center">
        <span className="ml-px">
          <DocumentIcon />
        </span>
        <h2 className="ml-2 text-xl leading-7 font-medium text-[#4a5875]">Showing Requests</h2>
        <p className="ml-[11px] text-sm leading-5 font-medium text-[#7e8699]">(675 Requests found)</p>
      </div>
      <div className="flex gap-[15px]">
        <button type="button" className={`${PILL} w-[151px] gap-[5px] bg-[#fff5f4] text-[#ff5a57]`}>
          <ResetIcon />
          Reset Data
        </button>
        <button type="button" className={`${PILL} w-[145px] gap-[6px] bg-[#46c367] text-white`}>
          <PulseIcon size={20} stroke={1.600} />
          Create Report
        </button>
        <button type="button" className={WHITE_PILL}>
          <DownloadIcon />
          Download
        </button>
        <button type="button" className={WHITE_PILL}>
          <PrintIcon />
          Print
        </button>
        <button type="button" className={WHITE_PILL}>
          <ShareIcon />
          Share
        </button>
      </div>
    </div>
  );
}

function LocationTag({ name }: { name: string }) {
  return (
    <span className="flex h-6 items-center gap-[3px] rounded-[3px] bg-[#e0f5e6] pr-[6px] pl-[5px] text-xs leading-4 font-medium text-[#28304e]">
      <button type="button" aria-label={`Remove ${name}`} className="text-[#46c367]">
        <svg width="7" height="8" viewBox="0 0 7 8" stroke="currentColor" strokeWidth="1.700" aria-hidden="true">
          <path d="M.5 1l6 6M6.500 1l-6 6" />
        </svg>
      </button>
      {name}
    </span>
  );
}

function DateRow({ id, label, value }: { id: string; label: string; value: string }) {
  return (
    <div className="flex items-center gap-5">
      <div className="relative w-[326px]">
        <input id={id} aria-label={label} defaultValue={value} className={`${FIELD} font-medium text-[#45536f]`} />
        <button type="button" aria-label="Open calendar" className="absolute top-[5px] right-5 flex size-[30px] items-center justify-center rounded-full bg-[#f0f1f5]">
          <CalendarIcon />
        </button>
      </div>
      <button type="button" aria-label="Add date" className="flex size-8 items-center justify-center rounded-full bg-[#46c367] text-white">
        <PlusIcon />
      </button>
    </div>
  );
}

function Filters() {
  return (
    <div className="flex gap-[60px] bg-[#f3f3f3] px-[60px] pt-[37px] pb-10">
      <div className="flex flex-1 flex-col">
        <label htmlFor="locations" className={LABEL}>
          Locations
        </label>
        <div className="mt-[18px] flex h-10 items-center gap-[9px] rounded-[3px] border border-[#dfe4ee] bg-white pr-[18px] pl-[19px]">
          <LocationTag name="Jumeirah Street" />
          <LocationTag name="Jumeirah Street" />
          <LocationTag name="Jumeirah Street" />
          <input id="locations" type="text" className="h-8 min-w-0 flex-1 bg-transparent text-sm outline-none" />
          <button type="button" aria-label="Show locations">
            <ChevronIcon />
          </button>
        </div>
        <div className="mt-5 flex items-center gap-[10px]">
          <TapIcon />
          <p className="text-[11px] leading-4 text-[#28304e]">Click on the map to selecr or deselect any area</p>
        </div>
      </div>
      <div className="flex flex-col">
        <label htmlFor="date" className={LABEL}>
          Date
        </label>
        <div className="mt-[18px] flex flex-col gap-5">
          <DateRow id="date" label="Date" value="Today" />
          <DateRow id="date-range" label="Date range" value="17 May, 2020 - 17 May, 2021" />
        </div>
      </div>
    </div>
  );
}

const ROUND_CONTROL = "flex size-[42px] items-center justify-center rounded-full bg-white shadow-[0_1px_4px_rgba(0,0,0,0.12)]";
const SQUARE_CONTROL = "flex size-[42px] items-center justify-center rounded-[5px] bg-white text-[#1c2747] shadow-[0_1px_4px_rgba(0,0,0,0.12)]";

function MapPanel() {
  return (
    <div className="relative mx-[60px] mt-[30px]">
      <DistrictMap />
      <div className="absolute right-12 bottom-[42px] flex flex-col items-center">
        <button type="button" aria-label="Globe view" className={ROUND_CONTROL}>
          <GlobeIcon />
        </button>
        <button type="button" aria-label="My location" className={`${ROUND_CONTROL} mt-[11px]`}>
          <TargetIcon />
        </button>
        <button type="button" aria-label="Zoom in" className={`${SQUARE_CONTROL} mt-[11px]`}>
          <PlusIcon />
        </button>
        <button type="button" aria-label="Zoom out" className={`${SQUARE_CONTROL} mt-[5px]`}>
          <MinusIcon />
        </button>
      </div>
    </div>
  );
}

const columns = ["Request ID", "Request Date", "Request Type", "Pick-up Location", "Policeman Name"];
const requests = [
  { key: "a", cells: ["87231", "6 Apr 2021", "Impound", "Sheikh Zayed St", "Ahmed Mahmoud"] },
  { key: "b", cells: ["87231", "6 Apr 2021", "Impound", "Sheikh Zayed St", "Ahmed Mahmoud"] },
];

function RequestsTable() {
  return (
    <div className="pt-[42px] pr-[61px] pl-[60px]">
      <table className="w-full table-fixed border-separate border-spacing-0 text-left text-[#333a4c]">
        <colgroup>
          <col className="w-[21.2%]" />
          <col className="w-[21.5%]" />
          <col className="w-[21.7%]" />
          <col className="w-[23.7%]" />
          <col className="w-[11.9%]" />
        </colgroup>
        <thead>
          <tr className="h-10">
            {columns.map((name) => (
              <th key={name} scope="col" className="text-lg leading-6 font-medium whitespace-nowrap first:pl-[60px]">
                {name}
              </th>
            ))}
          </tr>
        </thead>
        <tbody>
          {requests.map((row) => (
            <tr key={row.key} className="h-[58px] odd:bg-[#f3f7fa]">
              {row.cells.map((cell) => (
                <td key={cell} className="border-b border-[#f1f2f5] pb-[2px] text-base leading-6 font-medium whitespace-nowrap first:rounded-tl first:pl-[60px] last:rounded-tr">
                  {cell}
                </td>
              ))}
            </tr>
          ))}
        </tbody>
      </table>
    </div>
  );
}

export default function App() {
  return (
    <div className={`flex min-h-screen bg-[#f6f8fa] ${SANS}`}>
      <Sidebar />
      <div className="min-w-0 flex-1">
        <Header />
        <main className="flex flex-col gap-[30px] pt-[30px] pr-[59px] pl-[60px]">
          <SearchCard />
          <section className="bg-[#fefefe] shadow-[0_4px_30px_rgba(30,40,60,0.06)]">
            <Toolbar />
            <Filters />
            <MapPanel />
            <RequestsTable />
          </section>
        </main>
      </div>
    </div>
  );
}
